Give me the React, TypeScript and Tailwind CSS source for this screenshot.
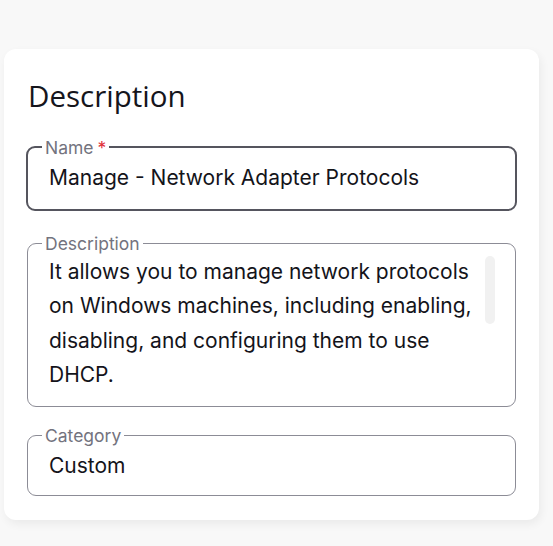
const inter = { fontFamily: 'Inter, "Noto Sans", sans-serif' };

function Field({
  label,
  required,
  focused,
  children,
  className = '',
}: {
  label: string;
  required?: boolean;
  focused?: boolean;
  children: React.ReactNode;
  className?: string;
}) {
  return (
    <fieldset
      className={
        focused
          ? `relative rounded-[9px] border-2 border-[#55555e] -mx-px px-[21px] ${className}`
          : `relative rounded-[9px] border border-[#8c8c96] px-[21px] ${className}`
      }
    >
      <legend className="-ml-[7px] px-[3px] text-[17.5px] leading-[21px] text-[#73737e]">
        {label}
        {required && <span className="ml-[4px] text-[#e0303a]">*</span>}
      </legend>
      {children}
    </fieldset>
  );
}

export default function App() {
  return (
    <div className="min-h-[546px] w-full bg-[#f8f8f8] pt-[49px] pl-[4px]" style={inter}>
      <div className="w-[535px] rounded-[12px] bg-white px-[23px] pt-[29px] pb-[24px] shadow-[2px_4px_10px_rgba(0,0,0,0.06)]">
        <h2
          className="ml-[1px] text-[29.5px] leading-[36px] text-[#15151c]"
          style={{ fontFamily: '"Open Sans", "Noto Sans", sans-serif' }}
        >
          Description
        </h2>

        <Field label="Name" required focused className="mt-[22.5px] pt-[6.5px] pb-[17px]">
          <div className="text-[21px] leading-[28px] text-[#14141a]">Manage - Network Adapter Protocols</div>
        </Field>

        <Field label="Description" className="mt-[22px] pt-[0.5px] pb-[13.5px]">
          <div className="flex">
            <div className="flex-1 whitespace-nowrap text-[21px] leading-[34.5px] text-[#14141a]">
              It allows you to manage network protocols
              <br />
              on Windows machines, including enabling,
              <br />
              disabling, and configuring them to use
              <br />
              DHCP.
            </div>
            <div className="mt-[1px] mr-[-1px] h-[68px] w-[10px] rounded-full bg-[#f1f1f1]" />
          </div>
        </Field>

        <Field label="Category" className="mt-[18px] pt-[6px] pb-[15px]">
          <div className="text-[21px] leading-[28px] text-[#14141a]">Custom</div>
        </Field>
      </div>
    </div>
  );
}
